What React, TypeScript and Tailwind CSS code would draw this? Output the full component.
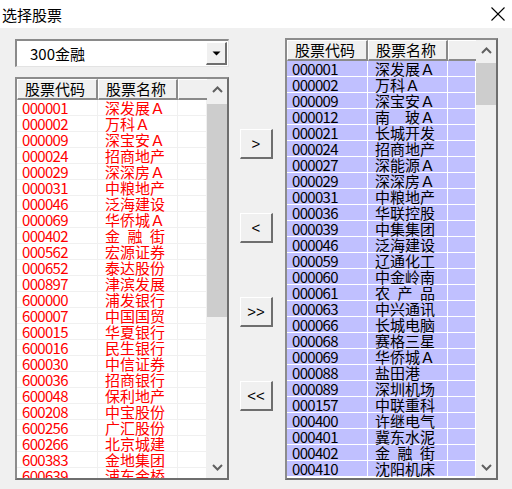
import React from "react";

const FONT = '"Noto Sans CJK SC", "Noto Sans", sans-serif';

const leftRows: [string, string][] = [
  ["000001", "深发展Ａ"],
  ["000002", "万科Ａ"],
  ["000009", "深宝安Ａ"],
  ["000024", "招商地产"],
  ["000029", "深深房Ａ"],
  ["000031", "中粮地产"],
  ["000046", "泛海建设"],
  ["000069", "华侨城Ａ"],
  ["000402", "金\u2002融\u2002街"],
  ["000562", "宏源证券"],
  ["000652", "泰达股份"],
  ["000897", "津滨发展"],
  ["600000", "浦发银行"],
  ["600007", "中国国贸"],
  ["600015", "华夏银行"],
  ["600016", "民生银行"],
  ["600030", "中信证券"],
  ["600036", "招商银行"],
  ["600048", "保利地产"],
  ["600208", "中宝股份"],
  ["600256", "广汇股份"],
  ["600266", "北京城建"],
  ["600383", "金地集团"],
  ["600639", "浦东金桥"],
];

const rightRows: [string, string][] = [
  ["000001", "深发展Ａ"],
  ["000002", "万科Ａ"],
  ["000009", "深宝安Ａ"],
  ["000012", "南　玻Ａ"],
  ["000021", "长城开发"],
  ["000024", "招商地产"],
  ["000027", "深能源Ａ"],
  ["000029", "深深房Ａ"],
  ["000031", "中粮地产"],
  ["000036", "华联控股"],
  ["000039", "中集集团"],
  ["000046", "泛海建设"],
  ["000059", "辽通化工"],
  ["000060", "中金岭南"],
  ["000061", "农\u2002产\u2002品"],
  ["000063", "中兴通讯"],
  ["000066", "长城电脑"],
  ["000068", "赛格三星"],
  ["000069", "华侨城Ａ"],
  ["000088", "盐田港"],
  ["000089", "深圳机场"],
  ["000157", "中联重科"],
  ["000400", "许继电气"],
  ["000401", "冀东水泥"],
  ["000402", "金\u2002融\u2002街"],
  ["000410", "沈阳机床"],
];

function Chevron({ up }: { up: boolean }) {
  return (
    <svg width="11" height="7" viewBox="0 0 11 7">
      {up ? (
        <polyline points="1,6 5.5,1.5 10,6" fill="none" stroke="#606060" strokeWidth="2" />
      ) : (
        <polyline points="1,1 5.5,5.5 10,1" fill="none" stroke="#606060" strokeWidth="2" />
      )}
    </svg>
  );
}

function HeaderCell({ label, w }: { label: string; w: string }) {
  return (
    <div
      className={`${w} h-full flex items-center pl-[7px] bg-[#f0f0f0] border-t border-l border-t-white border-l-white border-r-2 border-b-2 border-r-[#8a8a8a] border-b-[#8a8a8a] text-black text-[15px] leading-[16px] whitespace-nowrap`}
    >
      {label}
    </div>
  );
}

function StockList({
  rows,
  selected,
  thumbTop,
  thumbH,
}: {
  rows: [string, string][];
  selected: boolean;
  thumbTop: string;
  thumbH: string;
}) {
  const rowBg = selected ? "bg-[#c0c0ff]" : "bg-white";
  const sep = selected ? "shadow-[inset_-1px_-1px_0_#ffffff]" : "shadow-[inset_-1px_-1px_0_#f0f0f0]";
  const txt = selected ? "text-black" : "text-[#ff0000]";
  return (
    <div className="h-full border-2 border-t-[#8c8c8c] border-l-[#8c8c8c] border-b-[#6e6e6e] border-r-[#6e6e6e] bg-white flex overflow-hidden">
      <div className="flex-1 flex flex-col overflow-hidden">
        <div className="h-[21px] flex shrink-0">
          <HeaderCell label="股票代码" w="w-[81px]" />
          <HeaderCell label="股票名称" w="w-[80px]" />
          <div className="flex-1 h-full bg-[#f0f0f0] border-t border-l border-white border-b-2 border-b-[#8a8a8a]" />
        </div>
        {rows.map(([code, name]) => (
          <div key={code} className={`h-[16px] shrink-0 flex ${rowBg} ${txt} text-[15px] leading-[16px]`}>
            <div className={`w-[81px] h-full ${sep} pl-[5px] tracking-[-0.7px] whitespace-nowrap`}>{code}</div>
            <div className={`w-[80px] h-full ${sep} pl-[7px] whitespace-nowrap`}>{name}</div>
            <div className={`flex-1 h-full ${sep}`} />
          </div>
        ))}
      </div>
      <div className="w-[20px] h-full bg-[#f0f0f0] flex flex-col shrink-0">
        <div className="h-[21px] flex items-center justify-center shrink-0">
          <Chevron up={true} />
        </div>
        <div className={`${thumbTop} ${thumbH} bg-[#cdcdcd] shrink-0`} />
        <div className="flex-1" />
        <div className="h-[22px] flex items-center justify-center shrink-0">
          <Chevron up={false} />
        </div>
      </div>
    </div>
  );
}

function Btn({ label }: { label: string }) {
  return (
    <div
      className="w-[33px] h-[30px] bg-[#f0f0f0] border-t border-l border-t-white border-l-white border-r-2 border-b-2 border-r-[#6e6e6e] border-b-[#6e6e6e] flex items-center justify-center text-[15px] leading-none text-black"
      style={{ fontFamily: '"Liberation Sans", sans-serif', fontWeight: 300 }}
    >
      {label}
    </div>
  );
}

export default function App() {
  return (
    <div className="w-[512px] h-[489px] bg-[#f0f0f0] flex flex-col overflow-hidden" style={{ fontFamily: FONT }}>
      <div className="h-[28px] bg-white flex items-center justify-between pl-[2px] pr-[7px] shrink-0">
        <span className="text-[15px] text-black leading-none">选择股票</span>
        <svg width="14" height="14" viewBox="0 0 14 14">
          <line x1="0.5" y1="0.5" x2="13.5" y2="13.5" stroke="#000" strokeWidth="1.1" />
          <line x1="13.5" y1="0.5" x2="0.5" y2="13.5" stroke="#000" strokeWidth="1.1" />
        </svg>
      </div>
      <div className="flex pl-[15px] pt-[10px]">
        <div className="w-[214px] flex flex-col pt-[1px]">
          <div className="h-[28px] border-t-2 border-l-2 border-t-[#8a8a8a] border-l-[#8a8a8a] border-b border-r border-b-[#e3e3e3] border-r-[#e3e3e3] bg-white flex items-stretch">
            <div className="flex-1 flex items-center pl-[13px] text-[15px] text-black leading-none">300金融</div>
            <div className="w-[21px] my-[1px] mr-[1px] bg-[#f0f0f0] border-t border-l border-white border-r-2 border-b-2 border-r-[#6e6e6e] border-b-[#6e6e6e] flex items-center justify-center">
              <svg width="9" height="5" viewBox="0 0 9 5">
                <polygon points="0.5,0.5 8.5,0.5 4.5,4.5" fill="#000" />
              </svg>
            </div>
          </div>
          <div className="mt-[10px] h-[403px]">
            <StockList rows={leftRows} selected={false} thumbTop="mt-[4px]" thumbH="h-[213px]" />
          </div>
        </div>
        <div className="w-[56px] flex flex-col pl-[11px] pt-[91px] gap-[54px]">
          <Btn label=">" />
          <Btn label="<" />
          <Btn label=">>" />
          <Btn label="<<" />
        </div>
        <div className="w-[213px] h-[442px]">
          <StockList rows={rightRows} selected={true} thumbTop="mt-[2px]" thumbH="h-[42px]" />
        </div>
      </div>
    </div>
  );
}
